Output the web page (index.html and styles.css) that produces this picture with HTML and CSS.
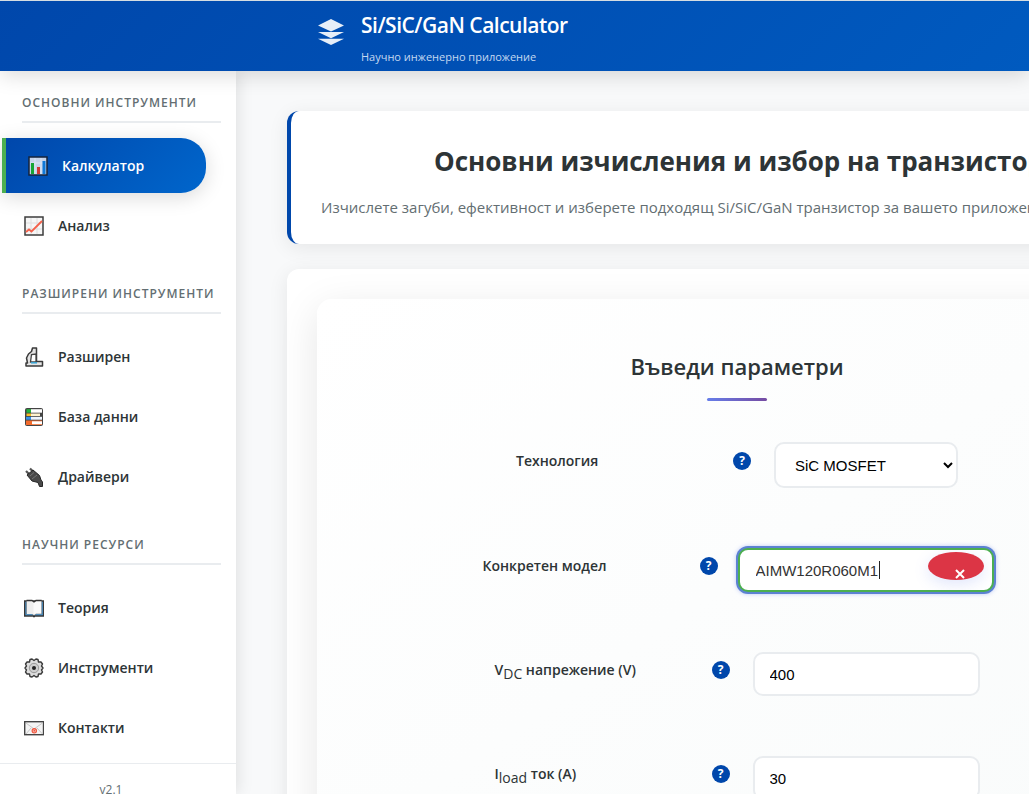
FILE: index.html
```html
<!DOCTYPE html>
<html lang="bg">
<head>
<meta charset="utf-8">
<title>Si/SiC/GaN Calculator</title>
<link rel="stylesheet" href="styles.css">
</head>
<body>
<header class="header">
  <svg class="logo" viewBox="0 0 28 28" aria-hidden="true"><path d="M14 1 27 7.500 14 13.500 1 7.500ZM1 14H27L14 20.200ZM1 20.800H27L14 27Z"/><path class="logo-cut" d="M8 14H20L14 16.500ZM8 20.600H20L14 22.500Z" opacity="0"/></svg>
  <div class="brand">
    <div class="brand-name">Si/SiC/GaN Calculator</div>
    <div class="brand-tag">Научно инженерно приложение</div>
  </div>
</header>
<div class="layout">
  <aside class="sidebar">
    <nav class="nav">
      <section class="nav-section">
        <h3 class="nav-title">Основни инструменти</h3>
        <a class="nav-item active" href="#calculator">
          <svg class="icon" viewBox="0 0 20 20" aria-hidden="true"><rect x="1" y="1" width="18" height="18" fill="#c5d3ea" stroke="#14233b" stroke-width="1.500"/><path d="M7 2V18M13 2V18M2 7H18" stroke="#dbe5f4"/><path d="M3 7H6V18H3Z" fill="#16a535"/><path d="M9 11H12V18H9Z" fill="#d13a35"/><path d="M14.500 5H17.500V18H14.500Z" fill="#0f78d8"/></svg>
          <span>Калкулатор</span></a>
        <a class="nav-item" href="#analysis">
          <svg class="icon" viewBox="0 0 20 20" aria-hidden="true"><rect x="1" y="1" width="18" height="18" fill="#f6f6f6" stroke="#3c3c3c" stroke-width="1.500"/><path d="M7 2V18M13 2V18M2 7H18M2 13H18" stroke="#dedede"/><path d="M2 16 5 13.500 7.500 15.500 18 5" fill="none" stroke="#f4614b" stroke-width="1.800"/></svg>
          <span>Анализ</span></a>
      </section>
      <section class="nav-section">
        <h3 class="nav-title">Разширени инструменти</h3>
        <a class="nav-item" href="#advanced">
          <svg class="icon" viewBox="0 0 20 20" aria-hidden="true"><path d="M8.500 1H12.500V14.500H18.500V19H2V16H3.500L2.500 11 4.500 7 7.500 4.500Z" fill="#e4e4e4" stroke="#3a3a3a" stroke-width="1.500" stroke-linejoin="round"/><path d="M7.500 7.500 6.500 15H12V7Z" fill="#fff" stroke="#444" stroke-width="1.300"/><path d="M7 15.800H13" stroke="#3aa7d8" stroke-width="1.500"/></svg>
          <span>Разширен</span></a>
        <a class="nav-item" href="#database">
          <svg class="icon" viewBox="0 0 20 20" aria-hidden="true"><rect x="1" y="1" width="18" height="18" rx="2" fill="#444"/><path d="M2.500 2.200H7V5.700H2.500Z" fill="#24b43c"/><path d="M7 2.200H18V5.700H7Z" fill="#fff"/><path d="M2.500 6.500H7V9H2.500Z" fill="#f6bd26"/><path d="M7 6.500H16V9H7Z" fill="#fff3cf"/><path d="M2 9.800H7V12.700H2Z" fill="#3692e8"/><path d="M7 9.800H18V12.700H7Z" fill="#eef6ff"/><path d="M2 13.500H18V18H2Z" fill="#f36b2c"/><path d="M8 14.300H18V17.200H8Z" fill="#fff"/></svg>
          <span>База данни</span></a>
        <a class="nav-item" href="#drivers">
          <svg class="icon" viewBox="0 0 20 20" aria-hidden="true"><path d="M2 4 5 7M6 1.500 9 4.500" stroke="#555" stroke-width="2.200"/><path d="M3 8 9 3 15.500 8.500 17 13 18.500 15V19.500H15.500L14 15.500 8 14Z" fill="#4a4a4a" stroke="#272727" stroke-linejoin="round"/><path d="M6 9 10 5.500M8 12 13 8" stroke="#777"/></svg>
          <span>Драйвери</span></a>
      </section>
      <section class="nav-section">
        <h3 class="nav-title">Научни ресурси</h3>
        <a class="nav-item" href="#theory">
          <svg class="icon" viewBox="0 0 20 20" aria-hidden="true"><path d="M.700 3H19.500V18H.700Z" fill="#4e9edb" stroke="#373737" stroke-width="1.400"/><path d="M2.500 2.500H8L10 4 12 2.500H17.700V16H12L10 17.500 8 16H2.500Z" fill="#fafafa" stroke="#555" stroke-width=".500"/><path d="M3 3H8L9.500 4.500V16H3Z" fill="#eee"/><path d="M2.500 2.500H8L10 4 12 2.500H17.700M9 18.500H11" fill="none" stroke="#333" stroke-width="1.300"/></svg>
          <span>Теория</span></a>
        <a class="nav-item" href="#tools">
          <svg class="icon" viewBox="0 0 20 20" aria-hidden="true"><path d="M8 1 10 2.500 12 1 14 1.500 14.500 4 17 4 18.500 6 17.500 8 19 10 17.500 12 18.500 14 17 16 14.500 16 14 18.500 12 19 10 17.500 8 19 6 18.500 5.500 16 3 16 1.500 14 2.500 12 1 10 2.500 8 1.500 6 3 4 5.500 4 6 1.500Z" fill="#dedede" stroke="#3b3b3b" stroke-width="1.400" stroke-linejoin="round"/><circle cx="10" cy="10" r="4.700" fill="#cfcfcf" stroke="#999"/><circle cx="10" cy="10" r="2" fill="#222"/></svg>
          <span>Инструменти</span></a>
        <a class="nav-item" href="#contacts">
          <svg class="icon" viewBox="0 0 20 20" aria-hidden="true"><rect x=".700" y="3.700" width="18.800" height="13" fill="#f4f4f4" stroke="#444" stroke-width="1.400"/><path d="M2 5 10 11 18.500 5M2 16 7 10M18.500 16 13 10" fill="none" stroke="#c8c8c8"/><circle cx="10.300" cy="12.800" r="2.200" fill="#f9b2a5" stroke="#f0563e" stroke-width="1.100"/><circle cx="10.300" cy="12.800" r=".700" fill="#e8432c"/></svg>
          <span>Контакти</span></a>
      </section>
    </nav>
    <footer class="version">v2.1</footer>
  </aside>
  <main class="main">
    <section class="card intro">
      <h1 class="intro-title">Основни изчисления и избор на транзистор</h1>
      <p class="intro-text">Изчислете загуби, ефективност и изберете подходящ Si/SiC/GaN транзистор за вашето приложение</p>
    </section>
    <section class="card panel">
      <form class="form">
        <h2 class="form-title">Въведи параметри</h2>
        <div class="row">
          <label class="label" for="tech">Технология</label>
          <button class="help" type="button" aria-label="Помощ за технология">?</button>
          <select class="field select" id="tech"><option>SiC MOSFET</option></select>
        </div>
        <div class="row">
          <label class="label" for="model">Конкретен модел</label>
          <button class="help" type="button" aria-label="Помощ за модел">?</button>
          <div class="model">
            <input class="field model-input" id="model" type="text" value="AIMW120R060M1">
            <span class="caret" aria-hidden="true"></span>
            <button class="clear" type="button" aria-label="Изчисти"><svg class="cross" viewBox="0 0 10 10" aria-hidden="true"><path d="M1 1 9 9M9 1 1 9"/></svg></button>
          </div>
        </div>
        <div class="row">
          <label class="label" for="vdc">V<sub>DC</sub> напрежение (V)</label>
          <button class="help" type="button" aria-label="Помощ за напрежение">?</button>
          <input class="field number" id="vdc" type="text" value="400">
        </div>
        <div class="row">
          <label class="label" for="iload">I<sub>load</sub> ток (A)</label>
          <button class="help" type="button" aria-label="Помощ за ток">?</button>
          <input class="field number" id="iload" type="text" value="30">
        </div>
      </form>
    </section>
  </main>
</div>
</body>
</html>
```
FILE: styles.css
```css
* { box-sizing: border-box; }
html { overflow: hidden; }
body {
  margin: 0;
  height: 100vh;
  display: flex;
  flex-direction: column;
  overflow: hidden;
  border-top: 1px solid #d5dde2;
  background: #f8f9fa;
  color: #2d3436;
  font-family: "Open Sans", "Noto Sans", sans-serif;
}
.header {
  position: relative;
  z-index: 2;
  flex: none;
  height: 70px;
  display: flex;
  align-items: flex-start;
  gap: 16px;
  padding: 10px 0 0 317px;
  background: linear-gradient(135deg, #0047ab, #005abf);
  box-shadow: 0 4px 20px rgba(0, 0, 0, 0.15);
  color: #fff;
}
.logo { width: 28px; height: 28px; margin-top: 7px; fill: #e6eef8; }
.brand-name { font-size: 21px; line-height: 28px; font-weight: 600; letter-spacing: -0.5px; }
.brand-tag { margin-top: 10px; font-size: 11px; line-height: 16px; color: #c4d8f0; }

.layout { flex: 1; min-height: 0; display: flex; align-items: stretch; }
.sidebar {
  position: relative;
  z-index: 1;
  flex: none;
  width: 236px;
  background: #fff;
  box-shadow: 2px 0 15px rgba(0, 0, 0, 0.1);
}
.nav { padding-top: 23px; }
.nav-section { display: flex; flex-direction: column; gap: 5px; margin-bottom: 32px; }
.nav-section:last-child { margin-bottom: 8px; }
.nav-title {
  margin: 0 15px 10px 22px;
  padding-bottom: 9px;
  border-bottom: 2px solid #e9ecef;
  color: #636e72;
  font-size: 12px;
  line-height: 18px;
  font-weight: 600;
  letter-spacing: 1px;
  text-transform: uppercase;
}
.nav-item {
  height: 55px;
  display: flex;
  align-items: center;
  gap: 14px;
  padding-left: 24px;
  color: #2d3436;
  font-size: 14px;
  font-weight: 600;
  text-decoration: none;
}
.nav-item.active {
  margin: 0 30px 0 2px;
  padding-left: 22px;
  border-left: 4px solid #4caf50;
  border-radius: 0 25px 25px 0;
  background: linear-gradient(135deg, #0047ab, #0066cc);
  box-shadow: 0 4px 20px rgba(0, 0, 0, 0.15);
  color: #fff;
}
.icon { width: 20px; height: 20px; }
.version {
  padding-top: 17px;
  padding-right: 14px;
  border-top: 1px solid #e9ecef;
  color: #636e72;
  font-size: 12px;
  line-height: 18px;
  text-align: center;
}

.main { flex: 1 0 auto; padding: 40px 51px; }
.card {
  width: 900px;
  border-radius: 12px;
  background: #fff;
  box-shadow: 0 4px 20px rgba(0, 0, 0, 0.08);
}
.intro { margin-bottom: 25px; padding: 30px 30px 28px; border-left: 4px solid #0047ab; }
.intro-title { margin: 0 0 17px; font-size: 26px; line-height: 40px; font-weight: 700; text-align: center; }
.intro-text { margin: 0; color: #636e72; font-size: 15px; line-height: 18px; white-space: nowrap; }
.panel { padding: 30px; }
.form {
  display: flex;
  flex-direction: column;
  gap: 60px;
  padding: 49px 40px;
  border-radius: 15px;
  background: linear-gradient(145deg, #fff, #f9fbfb);
  box-shadow: 0 10px 40px rgba(0, 0, 0, 0.1);
}
.form-title {
  display: flex;
  flex-direction: column;
  align-items: center;
  gap: 14px;
  margin: 0 0 -19px;
  font-size: 22px;
  line-height: 36px;
  font-weight: 600;
}
.form-title::after {
  content: "";
  width: 60px;
  height: 3px;
  border-radius: 2px;
  background: linear-gradient(90deg, #667eea, #764ba2);
}
.row { display: flex; justify-content: center; align-items: center; }
.label { width: 217px; margin-bottom: 8px; font-size: 14px; line-height: 20px; font-weight: 600; }
.label sub { font-size: 14px; line-height: 0; font-weight: 500; }
.help {
  width: 18px;
  height: 18px;
  margin: 0 23px 8px 0;
  padding: 0;
  border: 0;
  border-radius: 50%;
  background: #0047ab;
  color: #fff;
  font: 700 12px/18px "Open Sans", sans-serif;
}
.field {
  height: 44px;
  padding: 0 15px;
  border: 2px solid #e9ecef;
  border-radius: 10px;
  outline: 0;
  background: #fff;
  color: #000;
  font: 15px "Liberation Sans", Arial, sans-serif;
}
.number { width: 227px; }
.select { width: 184px; height: 46px; padding: 0 0 0 15px; }
.model { position: relative; width: 256px; margin: 0 -2px 0 -3px; }
.model-input {
  display: block;
  width: 100%;
  padding: 0 16px;
  border-color: #4caf50;
  box-shadow: 0 0 0 2px #5c82d2, 0 0 4px 2px rgba(102, 126, 234, 0.4);
  color: #333;
}
.caret { position: absolute; top: 13px; left: 141px; width: 1px; height: 18px; background: #222; }
.clear {
  position: absolute;
  top: 4px;
  right: 10px;
  width: 56px;
  height: 28px;
  padding: 9px 0 0 9px;
  border: 0;
  border-radius: 50%;
  background: #dc3545;
  box-shadow: 0 4px 15px rgba(102, 126, 234, 0.2);
  line-height: 0;
}
.cross { width: 10px; height: 10px; margin-top: 7px; fill: none; stroke: #fff; stroke-width: 2; }
```
